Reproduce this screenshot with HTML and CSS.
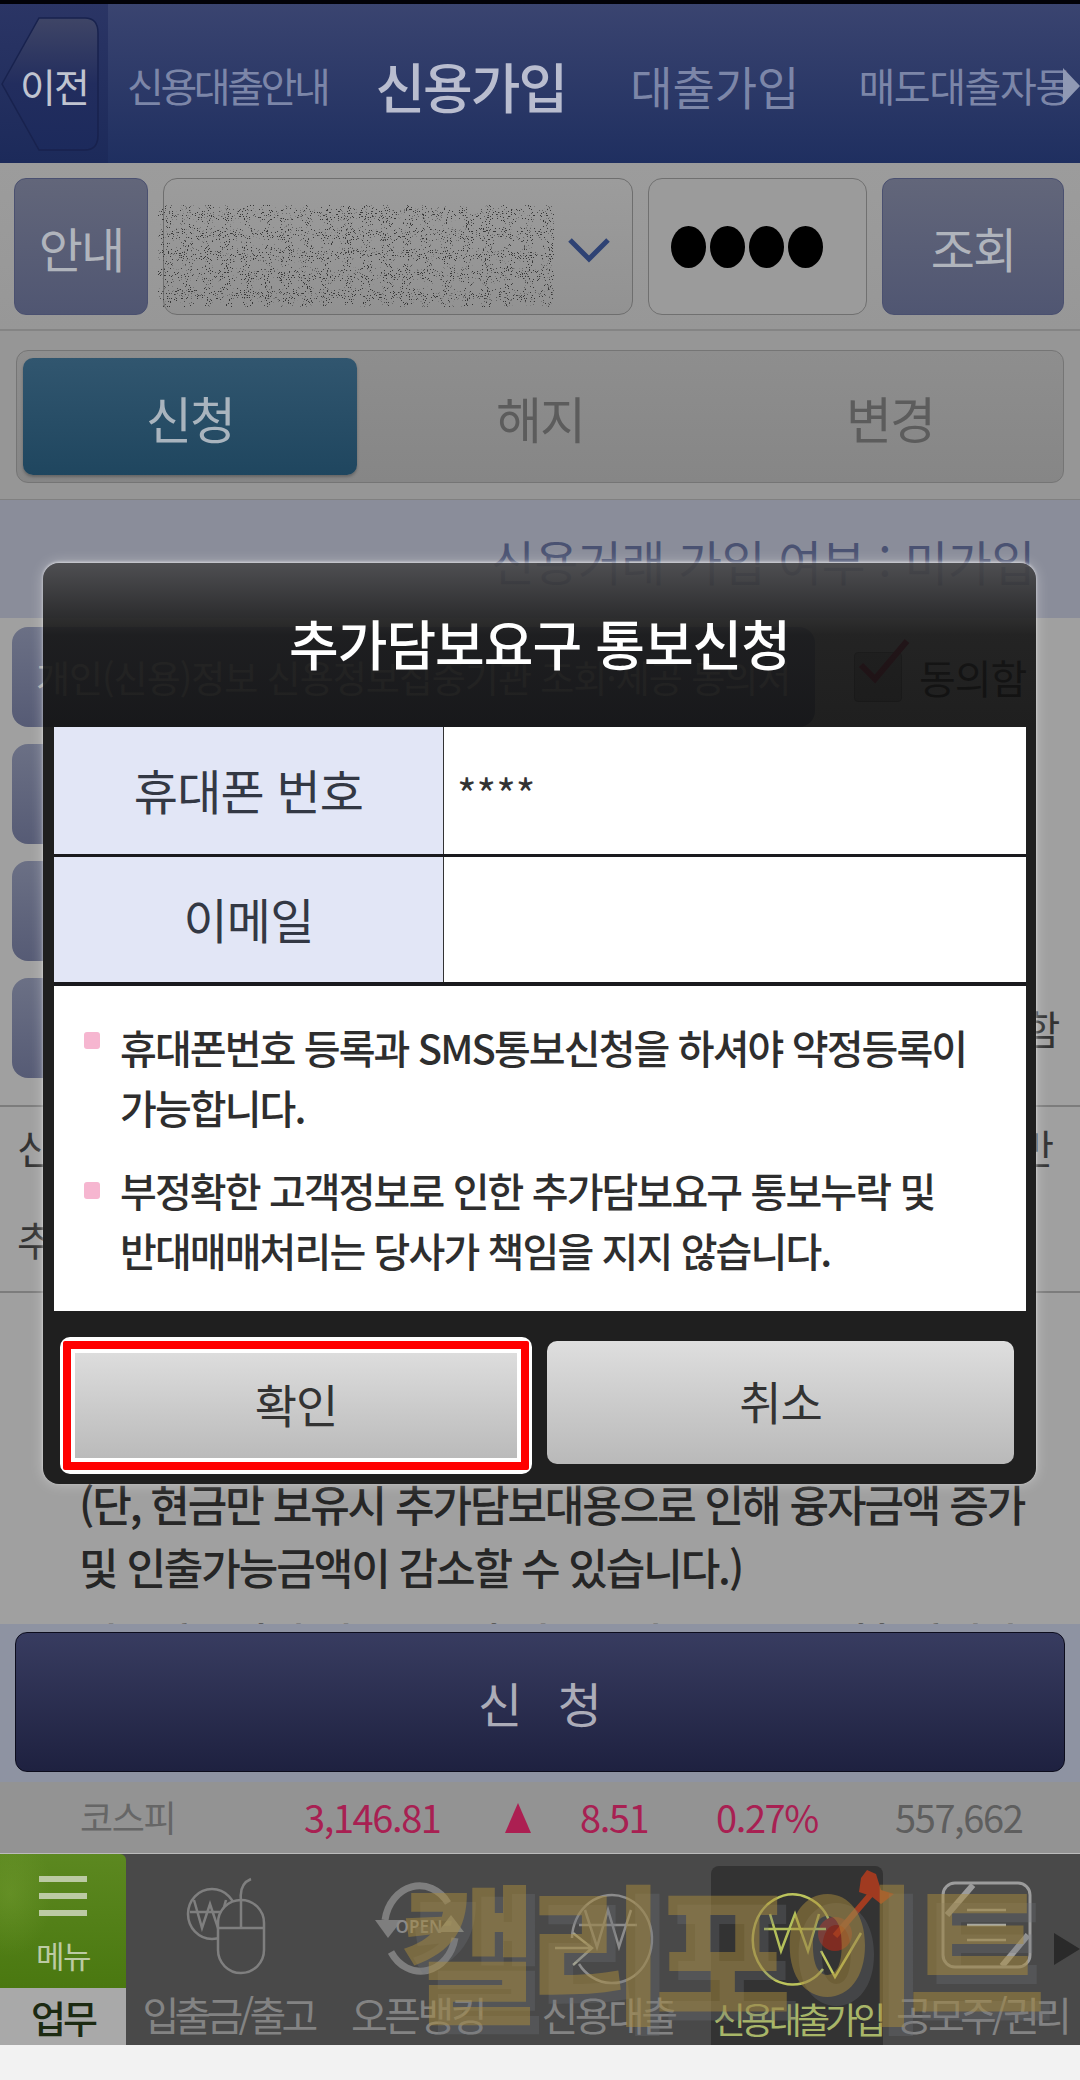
FILE: index.html
```html
<!DOCTYPE html>
<html lang="ko">
<head>
  <meta charset="UTF-8">
  <meta name="viewport" content="width=device-width, initial-scale=1.0">
  <title>추가담보요구 통보신청</title>
  <link rel="stylesheet" href="styles.css">
</head>
<body>
  <div class="app">
    <div class="status-strip"></div>

    <header class="top-header">
      <div class="back-col">
        <svg class="back-shape" width="100" height="134" viewBox="0 0 100 134">
          <defs>
            <linearGradient id="backFill" x1="0" y1="0" x2="0" y2="1">
              <stop offset="0" stop-color="#3f4566"/>
              <stop offset="0.5" stop-color="#222d5e"/>
              <stop offset="1" stop-color="#1c2a5c"/>
            </linearGradient>
          </defs>
          <path d="M1 67 L38 1 H84 Q97 1 97 16 V118 Q97 133 84 133 H38 Z" fill="url(#backFill)" stroke="#18224e" stroke-width="1.5"/>
        </svg>
        <span class="back-label">이전</span>
      </div>
      <nav class="top-tabs">
        <span class="top-tab">신용대출안내</span>
        <span class="top-tab current">신용가입</span>
        <span class="top-tab wide">대출가입</span>
        <span class="top-tab">매도대출자동</span>
      </nav>
      <span class="top-arrow"></span>
    </header>

    <section class="account-bar">
      <button class="blue-btn guide-btn">안내</button>
      <div class="account-select">
        <svg class="noise" width="396" height="102">
          <defs>
            <filter id="specks" x="0" y="0" width="100%" height="100%">
              <feTurbulence type="fractalNoise" baseFrequency="0.95" numOctaves="2" seed="7"/>
              <feColorMatrix type="matrix" values="0 0 0 0 0.04  0 0 0 0 0.04  0 0 0 0 0.04  0 0 0 16 -10.4"/>
            </filter>
          </defs>
          <rect width="396" height="102" filter="url(#specks)"/>
        </svg>
        <svg class="chevron" width="44" height="26" viewBox="0 0 44 26">
          <path d="M3 3 L22 22 L41 3" fill="none" stroke="#2e4274" stroke-width="5"/>
        </svg>
      </div>
      <div class="password-box">
        <span class="pw-dot"></span><span class="pw-dot"></span><span class="pw-dot"></span><span class="pw-dot"></span>
      </div>
      <button class="blue-btn search-btn">조회</button>
    </section>

    <section class="tab-bar">
      <div class="tab-box">
        <div class="tab active">신청</div>
        <div class="tab">해지</div>
        <div class="tab">변경</div>
      </div>
    </section>

    <section class="join-status">신용거래 가입 여부 : 미가입</section>

    <main class="scroll-area">
      <div class="agree-rows">
        <div class="agree-row">
          <div class="agree-btn">개인(신용)정보 신용정보집중기관 조회·제공 동의서</div>
          <span class="check-box">
            <svg width="64" height="56" viewBox="0 0 64 56">
              <path d="M8 26 L22 40 L54 2" fill="none" stroke="#8a1030" stroke-width="6"/>
            </svg>
          </span>
          <span class="agree-text">동의함</span>
        </div>
        <div class="agree-row"><div class="agree-btn"></div></div>
        <div class="agree-row"><div class="agree-btn"></div></div>
        <div class="agree-row last"><div class="agree-btn"></div><span class="agree-text">동의함</span></div>
      </div>
      <div class="info-rows">
        <div class="info-row"><span>신</span><span>반</span></div>
        <div class="info-row"><span>추</span></div>
      </div>
      <div class="notice">
        <p>(단, 현금만 보유시 추가담보대용으로 인해 융자금액 증가<br>및 인출가능금액이 감소할 수 있습니다.)</p>
        <p class="notice-next">이용하시려면 현금으로만 신용공여금을 모두 상환하여야</p>
      </div>
    </main>

    <section class="apply-bar">
      <button class="apply-btn">신 청</button>
    </section>

    <section class="index-row">
      <span class="idx-name">코스피</span>
      <span class="idx-up">3,146.81</span>
      <span class="idx-tri"></span>
      <span class="idx-up">8.51</span>
      <span class="idx-up">0.27%</span>
      <span class="idx-vol">557,662</span>
    </section>

    <nav class="bottom-nav">
      <div class="menu-col">
        <div class="menu-btn">
          <span class="burger"></span><span class="burger"></span><span class="burger"></span>
          <span class="menu-label">메뉴</span>
        </div>
        <div class="work-tab">업무</div>
      </div>

      <div class="nav-item item-bank">
        <svg width="204" height="126" viewBox="0 0 204 126">
          <ellipse cx="86" cy="52" rx="24" ry="25" fill="none" stroke="#7f7f7f" stroke-width="2.5"/>
          <path d="M68 38 L76 66 L84 42 L92 66 L100 38 M64 50 H104" fill="none" stroke="#7f7f7f" stroke-width="2.5"/>
          <rect x="92" y="38" width="46" height="73" rx="23" fill="#494949" stroke="#7f7f7f" stroke-width="2.5"/>
          <path d="M92 66 H138 M115 38 V66 M115 38 Q113 22 125 17" fill="none" stroke="#7f7f7f" stroke-width="2.5"/>
        </svg>
        <span class="nav-label slash">입출금/출고</span>
      </div>

      <div class="nav-item item-open">
        <svg width="175" height="126" viewBox="0 0 175 126">
          <path d="M55 58 A35 41 0 0 1 118 41" fill="none" stroke="#7e7e7e" stroke-width="7"/>
          <path d="M45 58 H72 L58 76 Z" fill="#7e7e7e"/>
          <path d="M125 76 A35 41 0 0 1 61 90" fill="none" stroke="#7e7e7e" stroke-width="7"/>
          <path d="M108 70 H134 L121 53 Z" fill="#8c8c80"/>
          <text class="open-text" x="89" y="71" text-anchor="middle">OPEN</text>
        </svg>
        <span class="nav-label">오픈뱅킹</span>
      </div>

      <div class="nav-item item-loan">
        <svg width="206" height="126" viewBox="0 0 206 126">
          <path d="M67 76 A40 44 0 1 1 74 102" fill="none" stroke="#8c8c8c" stroke-width="2.5"/>
          <path d="M80 48 L92 85 L103 48 L114 85 L126 48 M74 63 H132" fill="none" stroke="#8c8c8c" stroke-width="2.5"/>
          <path d="M50 86 H87 M68 71 L87 86 L68 103" fill="none" stroke="#a0a090" stroke-width="2.5"/>
        </svg>
        <span class="nav-label">신용대출</span>
      </div>

      <div class="nav-item item-join active">
        <svg width="172" height="126" viewBox="0 0 172 126">
          <path d="M112 103 A40 45 0 1 1 120 60" fill="none" stroke="#bcc45c" stroke-width="2.5"/>
          <circle cx="124" cy="68" r="17" fill="#7f2c22"/>
          <path d="M59 48 L70 85 L84 48 L97 85 L108 48 M53 63 H115" fill="none" stroke="#b4c05a" stroke-width="2.5"/>
          <path d="M124 70 L160 28" fill="none" stroke="#a23c20" stroke-width="6"/>
          <path d="M150 12 L156 4 L165 8 L170 24 L183 28 L170 38 L160 30 L148 26 Z" fill="#a03a20"/>
          <path d="M110 85 L124 111 L150 67" fill="none" stroke="#c0c860" stroke-width="2.5"/>
        </svg>
        <span class="nav-label">신용대출가입</span>
      </div>

      <div class="nav-item item-stock">
        <svg width="197" height="126" viewBox="0 0 197 126">
          <rect x="60" y="21" width="87" height="84" rx="12" fill="none" stroke="#9c9c9c" stroke-width="3"/>
          <path d="M84 48 H123 M84 63 H123 M84 78 H123" fill="none" stroke="#a8a8a0" stroke-width="2.5"/>
          <path d="M90 23 L64 53 M145 73 L119 104" fill="none" stroke="#9c9c9c" stroke-width="6"/>
        </svg>
        <span class="nav-label slash">공모주/권리</span>
      </div>

      <span class="nav-arrow"></span>
      <div class="watermark">캘리포이트</div>
    </nav>
  </div>

  <div class="dialog">
    <h1 class="dialog-title">추가담보요구 통보신청</h1>
    <div class="dialog-sheet">
      <div class="form-row">
        <div class="form-label">휴대폰 번호</div>
        <div class="form-value">****</div>
      </div>
      <div class="form-row">
        <div class="form-label">이메일</div>
        <div class="form-value"></div>
      </div>
      <ul class="note-list">
        <li>휴대폰번호 등록과 SMS통보신청을 하셔야 약정등록이<br>가능합니다.</li>
        <li>부정확한 고객정보로 인한 추가담보요구 통보누락 및<br>반대매매처리는 당사가 책임을 지지 않습니다.</li>
      </ul>
    </div>
    <div class="dialog-actions">
      <div class="highlight"><button class="gray-btn">확인</button></div>
      <button class="gray-btn cancel">취소</button>
    </div>
  </div>
</body>
</html>
```

FILE: styles.css
```css
* {
  box-sizing: border-box;
}
body {
  margin: 0;
  width: 1080px;
  height: 2080px;
  position: relative;
  overflow: hidden;
  background: #f2f2f2;
  font-family: "Noto Sans CJK KR", sans-serif;
}
button {
  font-family: inherit;
  cursor: pointer;
}
.app {
  display: flex;
  flex-direction: column;
  height: 2045px;
}
.status-strip {
  height: 4px;
  background: #020208;
}

/* top header */
.top-header {
  height: 159px;
  display: flex;
  position: relative;
  overflow: hidden;
  background: linear-gradient(#3a4470, #1f2f60);
}
.back-col {
  width: 108px;
  position: relative;
  background: linear-gradient(#2b3565, #1c2a5a);
}
.back-shape {
  position: absolute;
  left: 1px;
  top: 13px;
}
.back-label {
  position: absolute;
  left: 20px;
  top: 52px;
  font-size: 39px;
  line-height: 58px;
  letter-spacing: -2px;
  color: #c0c4d0;
}
.top-tabs {
  display: flex;
  align-items: center;
  height: 162px;
  padding-left: 19px;
  white-space: nowrap;
}
.top-tab {
  font-size: 40px;
  letter-spacing: -3.4px;
  color: #7c86a8;
  margin-right: 48px;
}
.top-tab.current {
  font-size: 54px;
  font-weight: 500;
  letter-spacing: -2px;
  color: #b9bdcf;
  margin-right: 64px;
}
.top-tab.wide {
  font-size: 46px;
  letter-spacing: 0;
  margin-right: 59px;
}
.top-tab:last-child {
  letter-spacing: -1.4px;
  margin-right: 0;
}
.top-arrow {
  position: absolute;
  right: 0;
  top: 64px;
  border-left: 17px solid #9099b4;
  border-top: 18px solid transparent;
  border-bottom: 18px solid transparent;
}

/* account selector */
.account-bar {
  height: 168px;
  display: flex;
  gap: 15px;
  padding: 15px 15px 14px 14px;
  background: linear-gradient(#9c9c9c, #979797);
  border-bottom: 2px solid #848484;
}
.blue-btn {
  border: 1px solid #4a5070;
  border-radius: 12px;
  background: linear-gradient(#62667a, #505672);
  color: #b0b4bc;
  font-size: 48px;
  letter-spacing: -2px;
  padding: 0;
}
.guide-btn {
  width: 134px;
}
.search-btn {
  width: 182px;
}
.account-select {
  width: 470px;
  position: relative;
  border: 1px solid #6e6e6e;
  border-radius: 14px;
  background: linear-gradient(#9c9c9c, #929292);
}
.noise {
  position: absolute;
  left: -6px;
  top: 26px;
}
.chevron {
  position: absolute;
  left: 403px;
  top: 58px;
}
.password-box {
  width: 219px;
  display: flex;
  align-items: center;
  gap: 4px;
  padding-left: 22px;
  border: 1px solid #707070;
  border-radius: 14px;
  background: #9b9b9b;
}
.pw-dot {
  width: 35px;
  height: 42px;
  border-radius: 50%;
  background: #000;
}

/* tabs */
.tab-bar {
  height: 169px;
  padding: 19px 16px 16px;
  background: #969696;
  border-bottom: 1px solid #808080;
}
.tab-box {
  height: 133px;
  display: grid;
  grid-template-columns: 334px 366px 334px;
  padding: 7px 6px;
  border: 1px solid #757575;
  border-radius: 12px;
  background: linear-gradient(#8e8e8e, #868686);
}
.tab {
  display: flex;
  align-items: center;
  justify-content: center;
  font-size: 50px;
  letter-spacing: -2px;
  color: #5c5c5c;
}
.tab.active {
  border-radius: 10px;
  background: linear-gradient(#31566f, #1f465f);
  box-shadow: 0 2px 3px rgba(0, 0, 0, 0.25);
  color: #a9b4be;
}

.join-status {
  height: 118px;
  padding: 31px 45px 0 0;
  text-align: right;
  font-size: 47.5px;
  line-height: 60px;
  letter-spacing: -0.2px;
  color: #4a5272;
  background: #8a8d9a;
}

/* content behind the dialog */
.scroll-area {
  height: 1006px;
  overflow: hidden;
  background: #a0a0a0;
  color: #333;
}
.agree-rows {
  display: flex;
  flex-direction: column;
  gap: 17px;
  padding: 9px 0 27px 12px;
  border-bottom: 2px solid #7c7c7c;
}
.agree-row {
  height: 100px;
  display: flex;
  align-items: center;
  white-space: nowrap;
}
.agree-btn {
  width: 803px;
  height: 100%;
  display: flex;
  align-items: center;
  padding-left: 24px;
  border-radius: 16px;
  background: linear-gradient(#6b7085, #565b75);
  color: #a8a8a8;
  font-size: 37px;
  letter-spacing: -1px;
}
.check-box {
  width: 48px;
  height: 50px;
  margin: 0 17px 0 39px;
  position: relative;
  border: 1px solid #555;
  border-radius: 4px;
  background: #7a7a7a;
}
.check-box svg {
  position: absolute;
  left: -2px;
  top: -14px;
}
.agree-text {
  font-size: 40px;
  letter-spacing: -1px;
  color: #111;
}
.agree-row.last .agree-text {
  margin-left: 137px;
  color: #333;
}
.info-rows {
  border-bottom: 2px solid #7c7c7c;
}
.info-row {
  height: 92px;
  display: flex;
  align-items: center;
  justify-content: space-between;
  padding: 0 26px 12px 17px;
  font-size: 40px;
}
.notice {
  padding: 179px 30px 0 79px;
  font-size: 43px;
  font-weight: 500;
  line-height: 63px;
  letter-spacing: -2.1px;
  color: #262626;
  white-space: nowrap;
}
.notice p {
  margin: 0;
}
.notice .notice-next {
  margin-top: 12px;
}

/* apply button */
.apply-bar {
  height: 158px;
  padding: 8px 15px 10px;
  background: #8e93a2;
}
.apply-btn {
  width: 100%;
  height: 140px;
  border: 1px solid #0c0c1c;
  border-radius: 12px;
  background: linear-gradient(#383c60, #1e2140);
  color: #acacb8;
  font-size: 48px;
  word-spacing: 22px;
}

/* market index */
.index-row {
  height: 71px;
  display: grid;
  grid-template-columns: 224px 201px 75px 136px 179px 1fr;
  align-items: center;
  padding: 0 0 3px 80px;
  background: #939393;
  font-size: 38px;
  letter-spacing: -1.4px;
}
.idx-name {
  color: #666;
  font-size: 36px;
}
.idx-up {
  color: #a82052;
}
.idx-vol {
  color: #5e5e5e;
}
.idx-tri {
  width: 0;
  margin-top: 3px;
  border-left: 13px solid transparent;
  border-right: 13px solid transparent;
  border-bottom: 30px solid #ac1f52;
}

/* bottom nav */
.bottom-nav {
  height: 192px;
  display: flex;
  position: relative;
  overflow: hidden;
  background: #494949;
  border-top: 1px solid #bcbcbc;
}
.menu-col {
  width: 126px;
  display: flex;
  flex-direction: column;
}
.menu-btn {
  height: 134px;
  display: flex;
  flex-direction: column;
  align-items: center;
  padding-top: 22px;
  border-top-right-radius: 6px;
  background:
    radial-gradient(ellipse 60px 90px at 10px 40px, rgba(130, 170, 60, 0.3), transparent 70%),
    linear-gradient(#5c8820, #4a7810);
}
.burger {
  width: 48px;
  height: 6px;
  margin-bottom: 11px;
  background: #bccaa4;
}
.menu-label {
  margin-top: 8px;
  font-size: 31px;
  line-height: 40px;
  letter-spacing: -1.5px;
  color: #bccaa4;
}
.work-tab {
  flex: 1;
  display: flex;
  align-items: center;
  justify-content: center;
  background: #a9a9a9;
  color: #1c2a12;
  font-size: 38px;
  font-weight: 500;
  letter-spacing: -3px;
}
.nav-item {
  display: flex;
  flex-direction: column;
  align-items: center;
  padding-top: 8px;
  color: #838383;
}
.nav-item svg {
  flex: none;
  display: block;
  overflow: visible;
}
.nav-item.active {
  margin-top: 12px;
  padding-top: 0;
  border-radius: 8px 8px 0 0;
  background: #333;
  color: #a8b668;
}
.nav-label {
  margin-top: 0;
  font-size: 40px;
  line-height: 52px;
  letter-spacing: -3.5px;
  white-space: nowrap;
}
.nav-label.slash {
  letter-spacing: -4.8px;
}
.item-join .nav-label {
  font-size: 36px;
  letter-spacing: -5px;
}
.item-bank {
  width: 204px;
}
.item-open {
  width: 175px;
}
.item-loan {
  width: 206px;
}
.item-join {
  width: 172px;
}
.item-stock {
  width: 197px;
}
.open-text {
  font-family: "Noto Sans", sans-serif;
  font-size: 17px;
  font-weight: 600;
  fill: #8a8a8a;
}
.nav-arrow {
  position: absolute;
  right: 0;
  top: 79px;
  border-left: 26px solid #2a2a2a;
  border-top: 16px solid transparent;
  border-bottom: 16px solid transparent;
}
.watermark {
  position: absolute;
  left: 400px;
  top: -12px;
  font-size: 150px;
  font-weight: 900;
  line-height: 210px;
  letter-spacing: -11px;
  white-space: nowrap;
  color: rgba(170, 140, 60, 0.5);
  text-shadow: 9px 9px 0 rgba(110, 112, 120, 0.3);
  pointer-events: none;
}

/* dialog */
.dialog {
  position: absolute;
  left: 43px;
  top: 563px;
  width: 993px;
  height: 921px;
  display: flex;
  flex-direction: column;
  border-radius: 16px;
  background: linear-gradient(rgba(72, 72, 74, 0.9), rgba(22, 22, 22, 0.9) 72px, rgba(17, 17, 17, 0.9) 164px, #1f1f1f 164px);
  box-shadow: 0 -1px 3px rgba(255, 255, 255, 0.6), 0 0 14px rgba(255, 255, 255, 0.35);
}
.dialog-title {
  height: 164px;
  margin: 0;
  padding-top: 46px;
  text-align: center;
  font-size: 54px;
  font-weight: 500;
  line-height: 68px;
  letter-spacing: -1px;
  color: #fff;
}
.dialog-sheet {
  margin: 0 10px 0 11px;
  background: #1a1a1e;
}
.form-row {
  height: 127px;
  display: grid;
  grid-template-columns: 390px 1fr;
  margin-bottom: 3px;
}
.form-row + .form-row {
  height: 125px;
  margin-bottom: 4px;
}
.form-label {
  display: flex;
  align-items: center;
  justify-content: center;
  padding-bottom: 3px;
  background: #e2e6f6;
  border-right: 1px solid #333;
  font-size: 48px;
  letter-spacing: -0.8px;
  color: #333844;
}
.form-value {
  padding: 36px 0 0 13px;
  background: #fff;
  font-size: 42px;
  line-height: 60px;
  color: #333;
}
.note-list {
  height: 325px;
  margin: 0;
  padding: 31px 0 0 66px;
  list-style: none;
  background: #fff;
  font-size: 40px;
  font-weight: 500;
  line-height: 60px;
  letter-spacing: -1.9px;
  color: #2e2e2e;
  white-space: nowrap;
}
.note-list li {
  position: relative;
  margin-bottom: 23px;
}
.note-list li::before {
  content: "";
  position: absolute;
  left: -36px;
  top: 15px;
  width: 16px;
  height: 17px;
  border-radius: 3px;
  background: #f6b6d0;
}
.note-list li + li::before {
  top: 22px;
}
.dialog-actions {
  display: flex;
  align-items: flex-start;
  padding: 26px 22px 0 17px;
  gap: 15px;
}
.highlight {
  width: 472px;
  height: 137px;
  padding: 4px 3px;
  border-radius: 10px;
  background: #fff;
}
.gray-btn {
  width: 100%;
  height: 100%;
  padding: 0 0 6px;
  border: 0;
  border-radius: 10px;
  background: linear-gradient(#dedede, #b9b9b9);
  color: #333;
  font-size: 46px;
  letter-spacing: -1px;
}
.highlight .gray-btn {
  border: 8px solid #f00;
  outline: 4px solid #fff;
  outline-offset: -12px;
  border-radius: 2px;
}
.gray-btn.cancel {
  width: 467px;
  height: 123px;
  margin-top: 4px;
}
```
